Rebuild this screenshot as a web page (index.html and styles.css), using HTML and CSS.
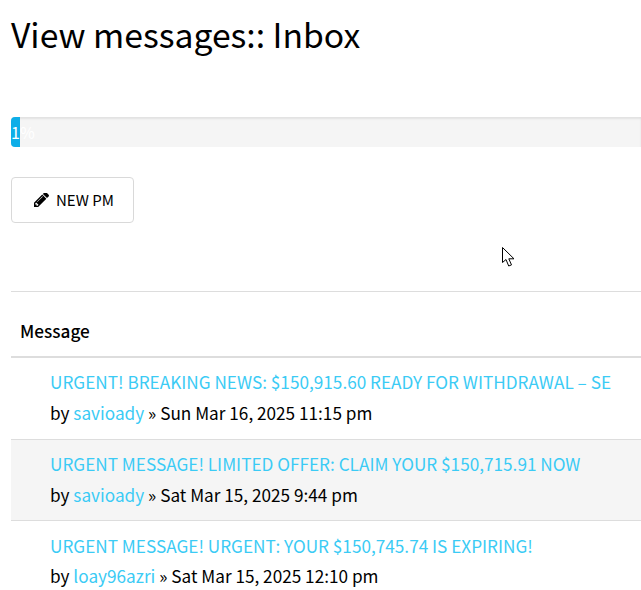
FILE: index.html
```html
<!DOCTYPE html>
<html lang="en">
<head>
    <meta charset="UTF-8">
    <title>View messages: Inbox</title>
    <link rel="stylesheet" href="styles.css">
</head>
<body>

    <h1>View messages:: Inbox</h1>

    <div class="progress">
        <div class="progress-bar">1%</div>
    </div>

    <a href="#" class="btn">
        <svg class="icon" viewBox="0 128 1515 1408" width="15" height="14">
            <path fill="#000" d="M363 1408l91-91-235-235-91 91v107h128v128h107zm523-928q0-22-22-22-10 0-17 7l-542 542q-7 7-7 17 0 22 22 22 10 0 17-7l542-542q7-7 7-17zm-54-192l416 416-832 832h-416v-416zm683 96q0 53-37 90l-166 166-416-416 166-165q36-38 90-38 53 0 91 38l235 234q37 39 37 91z"/>
        </svg>
        NEW PM
    </a>

    <table class="messages">
        <thead>
            <tr><th>Message</th></tr>
        </thead>
        <tbody>
            <tr>
                <td>
                    <a href="#" class="subject">URGENT! BREAKING NEWS: $150,915.60 READY FOR WITHDRAWAL – SE</a>
                    <div class="meta">by <a href="#">savioady</a> » Sun Mar 16, 2025 11:15 pm</div>
                </td>
            </tr>
            <tr class="alt">
                <td>
                    <a href="#" class="subject">URGENT MESSAGE! LIMITED OFFER: CLAIM YOUR $150,715.91 NOW</a>
                    <div class="meta">by <a href="#">savioady</a> » Sat Mar 15, 2025 9:44 pm</div>
                </td>
            </tr>
            <tr>
                <td>
                    <a href="#" class="subject">URGENT MESSAGE! URGENT: YOUR $150,745.74 IS EXPIRING!</a>
                    <div class="meta">by <a href="#">loay96azri</a> » Sat Mar 15, 2025 12:10 pm</div>
                </td>
            </tr>
        </tbody>
    </table>

    <svg class="cursor" viewBox="0 0 13 20" width="13" height="20">
        <path fill="#fff" stroke="#000" stroke-width="1" d="M.5.5V15.500L4 12.500l2.700 6.500 2.800-1.100-2.700-6.100h5.200z"/>
    </svg>

</body>
</html>
```

FILE: styles.css
```css
* {
    margin: 0;
    padding: 0;
    box-sizing: border-box;
    font-family: "Noto Sans CJK SC", "Noto Sans", sans-serif;
}

html, body {
    height: 100%;
    overflow: hidden;
}

body {
    padding-left: 11px;
    background-color: #fff;
    color: #000;
    font-size: 17.2px;
    line-height: 30px;
    position: relative;
}

a {
    color: #3bcbf5;
    text-decoration: none;
}

h1 {
    font-size: 33.700px;
    font-weight: 400;
    line-height: 40px;
    padding-top: 14px;
    margin-bottom: 63px;
}

.progress {
    height: 30px;
    background-color: #f5f5f5;
    border-radius: 4px 0 0 4px;
    box-shadow: inset 0 2px 2px rgba(0,0,0,0.08);
    margin-bottom: 30px;
}

.progress-bar {
    width: 9px;
    height: 30px;
    background-color: #0eaee8;
    border-radius: 4px 0 0 4px;
    color: #fff;
    font-size: 16px;
    line-height: 30px;
    white-space: nowrap;
}

.btn {
    display: inline-flex;
    align-items: center;
    gap: 7px;
    height: 46px;
    padding: 0 19px 0 22px;
    border: 1px solid #d9d9d9;
    border-radius: 4px;
    color: #000;
    font-size: 15px;
}

.messages {
    display: table;
    width: 630px;
    margin-top: 68px;
    border-collapse: collapse;
    border-top: 1px solid #ddd;
}

.messages th {
    text-align: left;
    font-weight: 500;
    height: 65.400px;
    padding: 14px 9px 0;
    border-bottom: 2px solid #ddd;
}

.messages td {
    padding: 9.600px 10px 9.900px 39px;
    line-height: 30.600px;
    border-bottom: 1px solid #ddd;
}

.messages tr:last-child td {
    border-bottom: none;
}

.alt td {
    background-color: #f5f5f5;
}

.subject {
    display: block;
    white-space: nowrap;
}

.cursor {
    position: absolute;
    left: 502px;
    top: 247px;
}
```
